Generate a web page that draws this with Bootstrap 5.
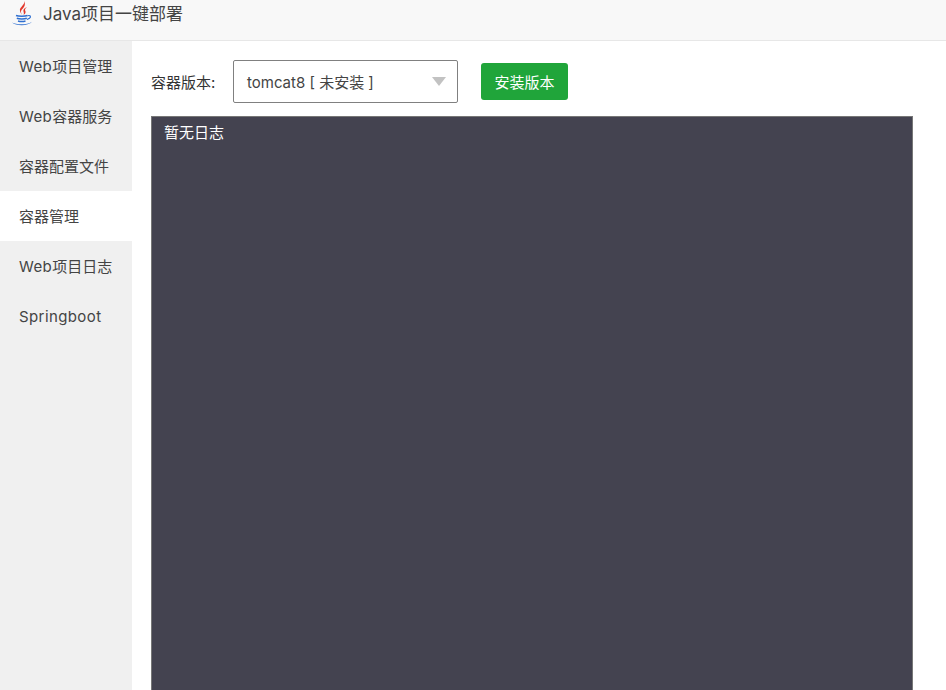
<!DOCTYPE html>
<html lang="zh">
<head>
<meta charset="utf-8">
<link rel="stylesheet" href="https://cdn.jsdelivr.net/npm/bootstrap@5.3.0/dist/css/bootstrap.min.css">
<style>
html,body{height:690px;overflow:hidden}
body{font-family:Inter,"Noto Sans CJK SC",sans-serif;font-size:15px;color:#333;background:#fff}
.app-top{height:41px;background:#f8f8f8;border-bottom:1px solid #e7e7e7;padding-left:11px;gap:10px;padding-bottom:13px}
.app-title{font-size:17px;line-height:24px;color:#444}
.app-body{height:649px;overflow:hidden}
.side{width:132px;background:#f0f0f0;flex:none}
.side-item{height:50px;line-height:52px;padding-left:19px;color:#444;font-size:15px;white-space:nowrap}
.side-item.on{background:#fff}
.latin-wide{letter-spacing:.4px}
.main-pane{padding:19px 33px 0 19px;min-width:0}
.tool-row{height:43px;margin-bottom:13px}
.tool-label{width:82px;font-size:15px;padding-top:3px}
.ver-select{width:225px;height:43px;border:1px solid #808080;border-radius:2px;padding:4px 0 0 13px;font-size:15px;position:relative;color:#444}
.ver-arrow{position:absolute;right:11px;top:16px;width:0;height:0;border-left:7px solid transparent;border-right:7px solid transparent;border-top:9px solid #c2c2c2}
.btn-inst{margin-left:23px;width:87px;height:37px;padding:4px 0 0;background:#20a53a;border:0;border-radius:3px;color:#fff;font-size:15px}
.log-box{background:#444350;border:1px solid #777;height:600px;padding:6px 12px;color:#fff;font-size:15px;line-height:20px}
</style>
</head>
<body>
<div class="app-top d-flex align-items-center">
<svg width="22" height="26" viewBox="0 0 22 26"><path d="M13 0c1.500 4-5 6-4 10 .3 1.500 1.200 2.800 2 4-1-2-1.500-3.500-.5-5C12 7 15.500 4.500 13 0z" fill="#e2382c"/><path d="M16 6c-3 1.300-4 2.800-3.500 4.500.4 1.200.6 2.500 0 3.500 2-1.300 2.600-2.800 1.700-4.300C13.600 8.500 14.500 7.200 16 6z" fill="#e2382c"/><path d="M5 14.500c2.500 1 9 1 11.500 0M5.800 17.300c2.300.8 7.700.8 10 0M7 20c2 .6 5.500.6 7.500 0" fill="none" stroke="#2f6fd0" stroke-width="1.500"/><path d="M16.500 14.800c3-1 3.800 1 2 2.400l-2.500 1.300" fill="none" stroke="#2f6fd0" stroke-width="1.200"/><path d="M1 21.500c4 2.300 15 2.800 20-.7-3.500 4.500-16 4.500-20 .7z" fill="#2f6fd0"/></svg>
<span class="app-title">Java项目一键部署</span>
</div>
<div class="app-body d-flex">
<nav class="side">
<div class="side-item"><span class="latin-wide">Web</span>项目管理</div>
<div class="side-item"><span class="latin-wide">Web</span>容器服务</div>
<div class="side-item">容器配置文件</div>
<div class="side-item on">容器管理</div>
<div class="side-item"><span class="latin-wide">Web</span>项目日志</div>
<div class="side-item"><span class="latin-wide">Springboot</span></div>
</nav>
<main class="main-pane flex-grow-1">
<div class="tool-row d-flex align-items-center">
<span class="tool-label">容器版本:</span>
<div class="ver-select d-flex align-items-center">tomcat8 [ 未安装 ]<i class="ver-arrow"></i></div>
<button class="btn btn-inst" type="button">安装版本</button>
</div>
<div class="log-box">暂无日志</div>
</main>
</div>
<script src="https://cdn.jsdelivr.net/npm/bootstrap@5.3.0/dist/js/bootstrap.bundle.min.js"></script>
</body>
</html>
